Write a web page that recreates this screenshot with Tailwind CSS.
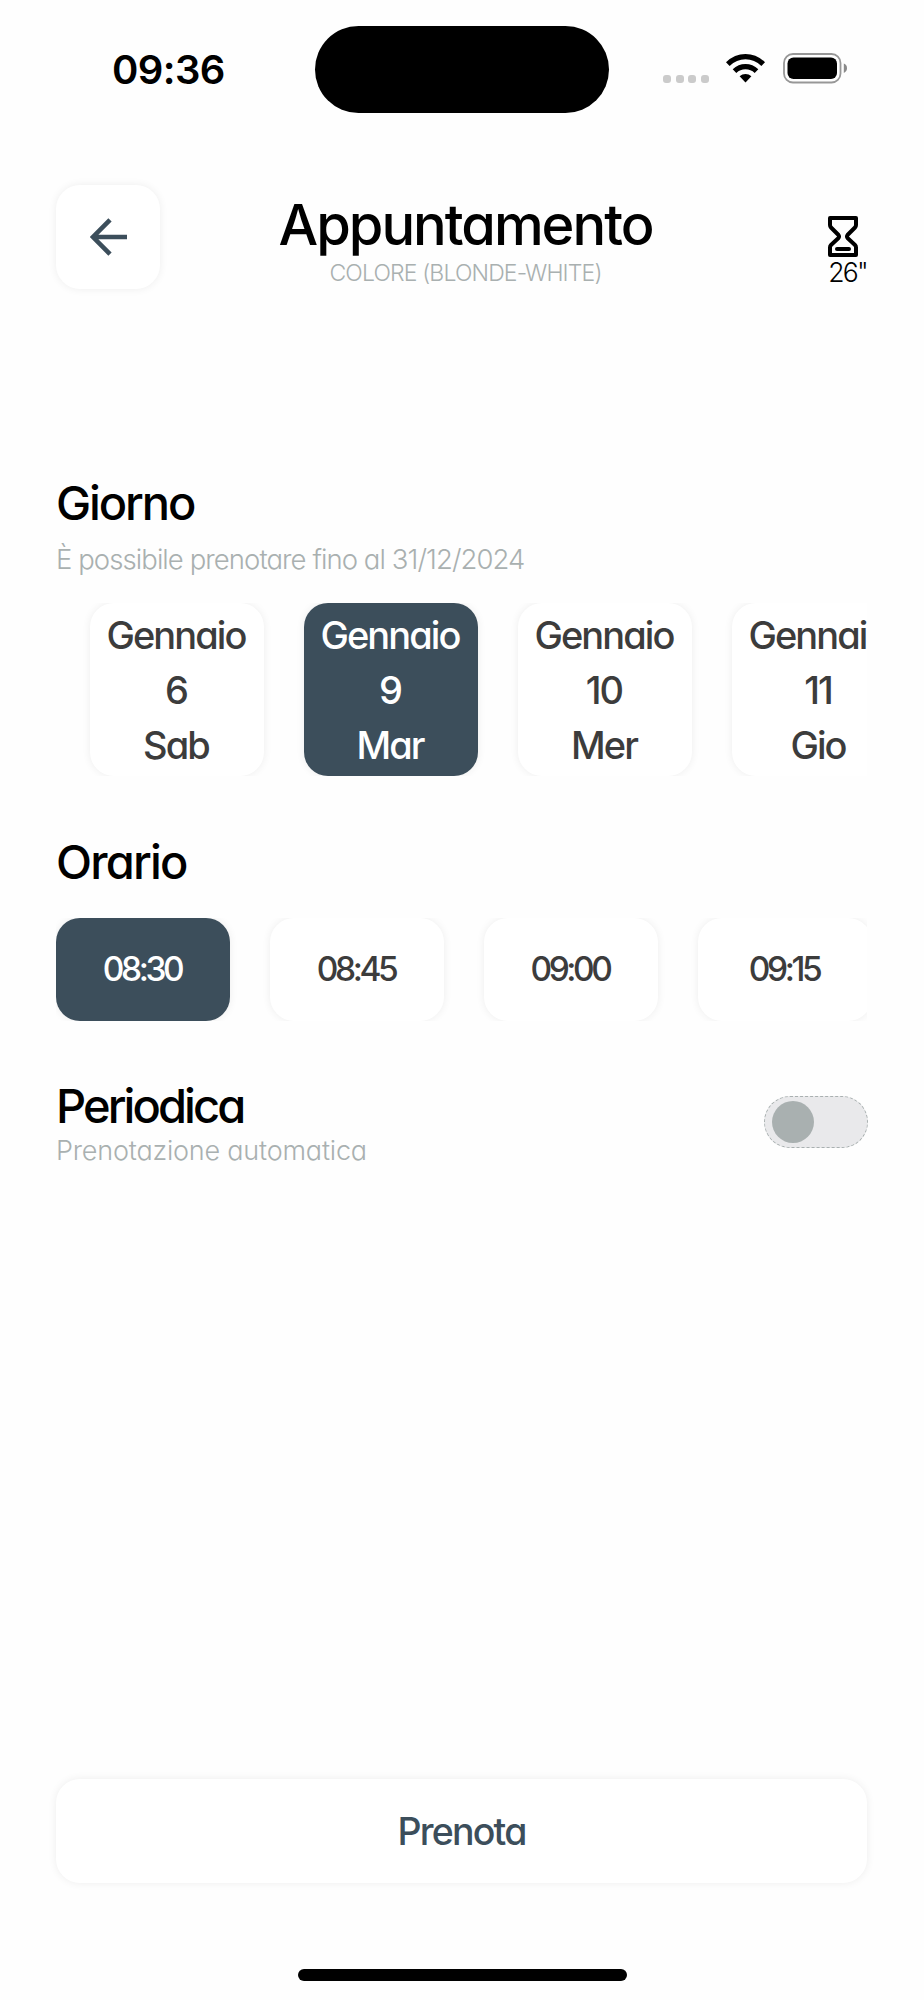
<!DOCTYPE html>
<html lang="it">
<head>
  <meta charset="UTF-8" />
  <meta name="viewport" content="width=device-width, initial-scale=1.0"/>
  <title>Appuntamento</title>
  <script src="https://cdn.jsdelivr.net/npm/@tailwindcss/browser@4"></script>
</head>
<body class="bg-[#fefefe] text-black font-['Inter',sans-serif] font-medium [font-feature-settings:'cv11']">
  <div class="w-[924px] h-[2000px] flex flex-col overflow-hidden">

    <!-- Status bar -->
    <div class="h-[185px] shrink-0 grid grid-cols-[315px_294px_1fr] pt-[26px] items-start">
      <div class="h-[87px] pl-[112px] text-[40px] leading-[87px] font-semibold tracking-[-0.6px]">09:36</div>
      <div class="h-[87px] rounded-full bg-black"></div>
      <div class="h-[87px] flex items-start pl-[54px] pt-[27px]">
        <div class="flex gap-[4.5px] pt-[22px] w-[63px]">
          <span class="w-2 h-2 rounded-[3px] bg-[#cbcbcb]"></span>
          <span class="w-2 h-2 rounded-[3px] bg-[#cbcbcb]"></span>
          <span class="w-2 h-2 rounded-[3px] bg-[#cbcbcb]"></span>
          <span class="w-2 h-2 rounded-[3px] bg-[#cbcbcb]"></span>
        </div>
        <svg class="w-[39px] h-[30px]" viewBox="0 0 39 30" fill="black">
          <path d="M0 9.2Q8.500 1 19.500 1T39 9.200L35.400 13Q28.500 6.300 19.500 6.300T3.600 13Z"/>
          <path d="M6.700 16.200Q12.200 11 19.500 11T32.300 16.200L28.700 20Q24.800 16.300 19.500 16.300T10.300 20Z"/>
          <path d="M13.600 23.200Q16.200 20.900 19.500 20.900T25.400 23.200L19.500 29.500Z"/>
        </svg>
        <svg class="w-[65px] h-[31px] ml-[18px]" viewBox="0 0 65 31">
          <rect x="1" y="1" width="56.500" height="28.500" rx="9" fill="none" stroke="#979797" stroke-width="1.800"/>
          <rect x="4.500" y="4.600" width="49.500" height="21.300" rx="6" fill="black"/>
          <path d="M60.800 10.600Q64 12 64 15.200T60.800 19.900Z" fill="#8a8a8a"/>
        </svg>
      </div>
    </div>

    <!-- Header -->
    <header class="h-[104px] shrink-0 ml-[56px] mr-[57px] grid grid-cols-[104px_1fr_96px]">
      <button class="w-[104px] h-[104px] rounded-3xl bg-white shadow-[0_0_8px_rgba(0,0,0,0.07)] flex items-center justify-center">
        <svg class="w-[38px] h-[38px]" viewBox="0 0 38 38" fill="none" stroke="#3c4e5b" stroke-width="4.600">
          <path d="M38 19H4.500M21 1.800L4 19L21 36.200"/>
        </svg>
      </button>
      <div class="text-center pt-[8px]">
        <h1 class="text-[56px] leading-[64px] tracking-[-2px]">Appuntamento</h1>
        <p class="mt-[2px] text-[23px] leading-7 tracking-[-0.850px] font-light text-[#a9b0b0]">COLORE (BLONDE-WHITE)</p>
      </div>
      <div class="flex flex-col items-end pt-[30px]">
        <svg class="w-[32px] h-[43px] mr-[8px]" viewBox="0 0 32 43" fill="none" stroke="black" stroke-width="4" stroke-linejoin="round" stroke-linecap="round">
          <path d="M3 3H29V10Q29 11.500 28 12.500L20.500 20Q19.500 21.500 20.500 23L28 30Q29 31 29 32.500V40H3V32.500Q3 31 4 30L11.500 23Q12.500 21.500 11.500 20L4 12.500Q3 11.500 3 10Z"/>
          <path d="M10 34H22"/>
        </svg>
        <p class="text-[26.5px] leading-7 tracking-[-1.700px] font-light">26"</p>
      </div>
    </header>

    <!-- Giorno -->
    <section class="shrink-0 ml-[56px] mr-[57px] mt-[186px]">
      <h2 class="text-[47px] leading-[56px] tracking-[-2.100px]">Giorno</h2>
      <p class="mt-[10px] text-[27.5px] leading-9 tracking-[-0.930px] font-light text-[#a9b0b0]">È possibile prenotare fino al 31/12/2024</p>
      <div class="mt-[26px] h-[173px] pl-[34px] flex gap-10 overflow-hidden text-[38px] text-[#3c3c3c] tracking-[-1.900px] leading-[55px] text-center">
        <div class="w-[174px] h-[173px] shrink-0 rounded-3xl bg-white shadow-[0_0_8px_rgba(0,0,0,0.07)] pt-[5px] pr-[2px]">
          <p>Gennaio</p><p>6</p><p>Sab</p>
        </div>
        <div class="w-[174px] h-[173px] shrink-0 rounded-3xl bg-[#3c4e5b] text-white shadow-[0_0_8px_rgba(0,0,0,0.07)] pt-[5px] pr-[2px]">
          <p>Gennaio</p><p>9</p><p>Mar</p>
        </div>
        <div class="w-[174px] h-[173px] shrink-0 rounded-3xl bg-white shadow-[0_0_8px_rgba(0,0,0,0.07)] pt-[5px] pr-[2px]">
          <p>Gennaio</p><p>10</p><p>Mer</p>
        </div>
        <div class="w-[174px] h-[173px] shrink-0 rounded-3xl bg-white shadow-[0_0_8px_rgba(0,0,0,0.07)] pt-[5px] pr-[2px]">
          <p>Gennaio</p><p>11</p><p>Gio</p>
        </div>
      </div>
    </section>

    <!-- Orario -->
    <section class="shrink-0 ml-[56px] mr-[57px] mt-[58px]">
      <h2 class="text-[47px] leading-[56px] tracking-[-1.800px]">Orario</h2>
      <div class="mt-[28px] h-[103px] flex gap-10 overflow-hidden text-[33.5px] text-[#3c3c3c] tracking-[-3.400px] leading-[103px] text-center">
        <div class="w-[174px] shrink-0 rounded-3xl bg-[#3c4e5b] text-white shadow-[0_0_8px_rgba(0,0,0,0.07)] pr-[2px]">08:30</div>
        <div class="w-[174px] shrink-0 rounded-3xl bg-white shadow-[0_0_8px_rgba(0,0,0,0.07)] pr-[2px]">08:45</div>
        <div class="w-[174px] shrink-0 rounded-3xl bg-white shadow-[0_0_8px_rgba(0,0,0,0.07)] pr-[2px]">09:00</div>
        <div class="w-[174px] shrink-0 rounded-3xl bg-white shadow-[0_0_8px_rgba(0,0,0,0.07)] pr-[2px]">09:15</div>
      </div>
    </section>

    <!-- Periodica -->
    <section class="shrink-0 ml-[56px] mr-[56px] mt-[57px] flex justify-between">
      <div>
        <h2 class="text-[47px] leading-[56px] tracking-[-2.900px]">Periodica</h2>
        <p class="-mt-[1px] text-[27px] leading-9 tracking-[-0.200px] font-light text-[#a9b0b0]">Prenotazione automatica</p>
      </div>
      <div class="mt-[18px] w-[104px] h-[52px] rounded-full bg-[#e9e9eb] border border-dashed border-[#a9b0b0] flex items-center pl-[7px]">
        <span class="w-[42px] h-[42px] rounded-full bg-[#a9b0b0]"></span>
      </div>
    </section>

    <!-- Footer -->
    <button class="mt-auto mb-[86px] ml-[56px] mr-[57px] h-[104px] shrink-0 rounded-3xl bg-white shadow-[0_0_8px_rgba(0,0,0,0.07)] pt-[2px] text-[37.5px] tracking-[-1.800px] text-[#3c4e5b]">Prenota</button>
    <div class="w-[329px] h-[12px] shrink-0 mb-[19px] ml-[298px] rounded-full bg-black"></div>

  </div>
</body>
</html>
